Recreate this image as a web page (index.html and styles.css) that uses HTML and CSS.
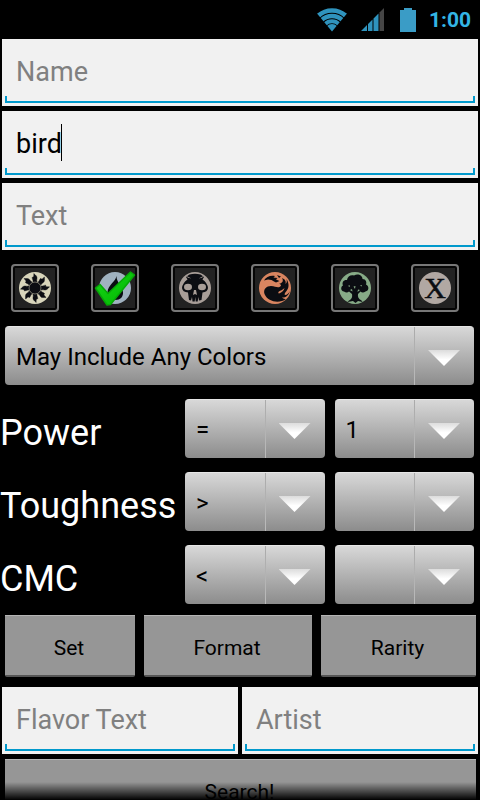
FILE: index.html
```html
<!DOCTYPE html>
<html lang="en">
<head>
<meta charset="utf-8">
<meta name="viewport" content="width=device-width, initial-scale=1">
<title>Card Search</title>
<link rel="stylesheet" href="styles.css">
</head>
<body>
<header class="status">
  <svg class="status-wifi" viewBox="0 0 30 24" aria-hidden="true">
    <clipPath id="wedge"><path d="M15 23.500L-3 2V-2H33V2Z"/></clipPath>
    <g clip-path="url(#wedge)" fill="none" stroke="#2f93bd">
      <circle cx="15" cy="23" r="20.500" stroke-width="4.700"/>
      <circle cx="15" cy="23" r="15" stroke-width="4.300"/>
      <circle cx="15" cy="23" r="9.800" stroke-width="4"/>
      <circle cx="15" cy="23" r="3.500" stroke-width="7"/>
    </g>
  </svg>
  <svg class="status-signal" viewBox="0 0 24 24" aria-hidden="true">
    <path d="M0 23L6 17V23ZM7 16L11.500 11.500V23H7ZM12.500 10.500L17.500 5.500V23H12.500Z" fill="#2f93bd"/>
    <path d="M18.500 4.500L23 0V23H18.500Z" fill="#454545"/>
  </svg>
  <svg class="status-battery" viewBox="0 0 16 24" aria-hidden="true">
    <path d="M0 2H4V0H12V2H16V24H0Z" fill="#3a9cc6"/>
  </svg>
  <time class="status-time">1:00</time>
</header>

<main class="form">
  <div class="field"><input class="field-input" type="text" placeholder="Name" aria-label="Name"></div>
  <div class="field"><input class="field-input" type="text" value="bird" aria-label="Type"><span class="caret"></span></div>
  <div class="field"><input class="field-input" type="text" placeholder="Text" aria-label="Text"></div>

  <div class="colors">
    <label class="mana">
      <input class="mana-box" type="checkbox" aria-label="White">
      <svg class="mana-icon" viewBox="0 0 48 48" aria-hidden="true">
        <defs><path id="ray" d="M22 18C22.500 16.500 21 15 21.200 13C22.200 13.800 23 13 22.800 9.500C24.500 11 26.500 12.500 26 14.500C25.600 16 25.800 17 26.200 18Z"/></defs>
        <circle cx="24" cy="24" r="16" fill="#d8d5bb"/>
        <g fill="#0b0d12" stroke="#0b0d12" stroke-width="0.400">
          <use href="#ray"/><use href="#ray" transform="rotate(45 24 24)"/><use href="#ray" transform="rotate(90 24 24)"/><use href="#ray" transform="rotate(135 24 24)"/>
          <use href="#ray" transform="rotate(180 24 24)"/><use href="#ray" transform="rotate(225 24 24)"/><use href="#ray" transform="rotate(270 24 24)"/><use href="#ray" transform="rotate(315 24 24)"/>
        </g>
        <circle cx="24" cy="24" r="6" fill="#0b0d12" stroke="#77766a" stroke-width="0.800"/>
      </svg>
    </label>
    <label class="mana">
      <input class="mana-box" type="checkbox" checked aria-label="Blue">
      <svg class="mana-icon" viewBox="0 0 48 48" aria-hidden="true">
        <circle cx="24" cy="24" r="16" fill="#a0b2c0"/>
        <path d="M25.500 12C25 17 17 21 16.500 28C16.300 33 20 36 24.500 36C29 36 32.500 33 32 28C31.500 22 25.500 19 25.500 12Z" fill="#0b0d12"/>
      </svg>
      <svg class="mana-tick" viewBox="0 0 48 48" aria-hidden="true">
        <defs><linearGradient id="tick" x1="0" y1="0" x2="1" y2="1"><stop offset="0" stop-color="#18d818"/><stop offset="1" stop-color="#00b400"/></linearGradient></defs>
        <path d="M4.500 24L9 20.500L17 29.500L39.500 8L43.500 11L19.500 40.500L16 41Z" fill="url(#tick)" stroke="#06a806" stroke-width="1.500" stroke-linejoin="round"/>
      </svg>
    </label>
    <label class="mana">
      <input class="mana-box" type="checkbox" aria-label="Black">
      <svg class="mana-icon" viewBox="0 0 48 48" aria-hidden="true">
        <circle cx="24" cy="24" r="16" fill="#a89e98"/>
        <path d="M15 13L18.500 10.500Q24 9 29.500 10.500L33 13L31.500 15.500Q36.500 19 37 24Q36.500 28 31.500 28.500L30.500 36L28 36.500L27.300 33L26.700 37.500H24.700L24.300 33L23.700 37.500H21.500L21 33L20 36.500L18 36L17 28.500Q11.500 28 11 24Q11.500 19 16.500 15.500Z" fill="#0b0d12"/>
        <path d="M14.500 11.500L20.500 14.500L17 13.800ZM33.500 11.500L27.500 14.500L31 13.800Z" fill="#a89e98"/>
        <ellipse cx="17" cy="23" rx="4" ry="3.300" fill="#a89e98"/>
        <ellipse cx="31" cy="23" rx="4" ry="3.300" fill="#a89e98"/>
        <path d="M23 26H25L26 31L24 30L22 31Z" fill="#a89e98"/>
      </svg>
    </label>
    <label class="mana">
      <input class="mana-box" type="checkbox" aria-label="Red">
      <svg class="mana-icon" viewBox="0 0 48 48" aria-hidden="true">
        <circle cx="24" cy="24" r="16" fill="#d98560"/>
        <path d="M13.500 30C12 25 15.500 22 20 22C24 22 26 24 28.500 23C31 22 30 20 28 20C31 19 33 17.500 31 14C35 15.500 35 18.500 34.500 20C36 19 36 17 35.500 15C38.500 20 38 24 35.500 27C34 29 33 30 34 31C36 31 38 29 39 27C37.500 32 34 34 31 33.500C32 35 34 35 35 35C29 39.500 17 38.500 13.500 30Z" fill="#0b0d12"/>
        <path d="M13 16.500C15 12.500 20 11 24 12L22.500 13.500L26.500 14L25 15.500L28.500 17L25 18.500L23 17.500L20.500 16L17 15.500ZM26 11L30 12.500L28 14Z" fill="#0b0d12"/>
        <path d="M28 29.500C31 28.500 33 26.500 33.500 24C31.500 26 29.500 26.500 28 27.500C27 28.300 27.200 29.300 28 29.500Z" fill="#d98560"/>
      </svg>
    </label>
    <label class="mana">
      <input class="mana-box" type="checkbox" aria-label="Green">
      <svg class="mana-icon" viewBox="0 0 48 48" aria-hidden="true">
        <circle cx="24" cy="24" r="16" fill="#87ab87"/>
        <path d="M13 27.500C9.500 27 9.500 22.500 12 21.500C10.500 18 13 15.500 16 16C16.500 12 20 10.500 23 11.500C27 9 31.500 11.500 31.500 15C35 15 36 18.500 35 20.500C38.500 22 38 27 34.500 27.500C32.500 29 30.500 28.500 29.500 27.500L27 30C26.500 33 27.500 35 30.500 36.500L31.500 38L27 37L24.500 39L22 37L16.500 38L18 36.500C21 35 21.500 33 21 30L18 27.500C16.500 29 14.500 28.500 13 27.500Z" fill="#0b0d12"/>
        <path d="M19 26L21.500 27.500L21 25ZM26.500 28L29 26L27 25.500ZM22.500 22.500L24 25L24.500 22ZM17 22L19 23L18.500 21ZM29 21.500L30.500 22.500L31 21Z" fill="#87ab87"/>
      </svg>
    </label>
    <label class="mana">
      <input class="mana-box" type="checkbox" aria-label="Colorless">
      <svg class="mana-icon" viewBox="0 0 48 48" aria-hidden="true">
        <circle cx="24" cy="24" r="16" fill="#b1a8a3"/>
        <text class="mana-x" x="24" y="34" text-anchor="middle">X</text>
      </svg>
    </label>
  </div>

  <div class="row">
    <div class="spinner"><select class="spinner-select" aria-label="Color rule"><option>May Include Any Colors</option></select></div>
  </div>
  <div class="row stat">
    <label class="stat-label" for="power-op">Power</label>
    <div class="spinner"><select class="spinner-select" id="power-op"><option>=</option></select></div>
    <div class="spinner"><select class="spinner-select" aria-label="Power value"><option>1</option></select></div>
  </div>
  <div class="row stat">
    <label class="stat-label" for="tough-op">Toughness</label>
    <div class="spinner"><select class="spinner-select" id="tough-op"><option>&gt;</option></select></div>
    <div class="spinner"><select class="spinner-select" aria-label="Toughness value"><option></option></select></div>
  </div>
  <div class="row stat">
    <label class="stat-label" for="cmc-op">CMC</label>
    <div class="spinner"><select class="spinner-select" id="cmc-op"><option>&lt;</option></select></div>
    <div class="spinner"><select class="spinner-select" aria-label="CMC value"><option></option></select></div>
  </div>

  <div class="filters">
    <button class="button" type="button">Set</button>
    <button class="button" type="button">Format</button>
    <button class="button" type="button">Rarity</button>
  </div>

  <div class="pair">
    <div class="field"><input class="field-input" type="text" placeholder="Flavor Text" aria-label="Flavor Text"></div>
    <div class="field"><input class="field-input" type="text" placeholder="Artist" aria-label="Artist"></div>
  </div>

  <div class="submit"><button class="button" type="submit">Search!</button></div>
</main>
</body>
</html>
```
FILE: styles.css
```css
* {
  box-sizing: border-box;
}

body {
  margin: 0;
  height: 100vh;
  display: flex;
  flex-direction: column;
  overflow: hidden;
  background: #000;
  color: #fff;
  font-family: Roboto, "Liberation Sans", sans-serif;
}

.status {
  flex: none;
  display: flex;
  justify-content: flex-end;
  align-items: center;
  height: 39px;
  padding-right: 9px;
}

.status-wifi {
  width: 30px;
  height: 24px;
  margin-right: 14px;
}

.status-signal {
  width: 24px;
  height: 24px;
  margin-right: 15px;
}

.status-battery {
  width: 16px;
  height: 24px;
  margin-right: 13px;
}

.status-time {
  color: #33b5e5;
  font-size: 21px;
  font-weight: 700;
}

.form {
  position: relative;
  flex: 1;
  min-height: 0;
  overflow: hidden;
}

/* Fading edge over content that continues below the fold */
.form::after {
  content: "";
  position: absolute;
  left: 0;
  right: 0;
  bottom: 0;
  height: 18px;
  background: linear-gradient(transparent, #000);
}

.field {
  position: relative;
  margin: 0 2px 5px;
  padding: 0 3px 3px;
  height: 67px;
  background: #f1f1f1;
}

.field-input {
  display: block;
  width: 100%;
  height: 64px;
  padding: 2px 11px 0;
  border: 0;
  border-radius: 0;
  outline: 0;
  background:
    linear-gradient(#0099cc, #0099cc) left bottom / 2px 7px no-repeat,
    linear-gradient(#0099cc, #0099cc) right bottom / 2px 7px no-repeat,
    linear-gradient(#0099cc, #0099cc) left bottom / 100% 2px no-repeat;
  color: #000;
  font-family: inherit;
  font-size: 27px;
}

.field-input::placeholder {
  color: #808080;
  opacity: 1;
}

.caret {
  position: absolute;
  left: 59px;
  top: 13px;
  width: 1px;
  height: 37px;
  background: #000;
}

.colors {
  display: grid;
  grid-template-columns: repeat(6, 1fr);
  padding: 9px 0 14px;
}

.mana {
  display: grid;
  grid-template-columns: 48px;
  margin-left: 11px;
}

.mana-box,
.mana-icon,
.mana-tick {
  grid-area: 1 / 1;
  width: 48px;
  height: 48px;
}

.mana-box {
  appearance: none;
  margin: 0;
  border: 2px solid #777;
  border-radius: 4px;
  background: #222;
  box-shadow: inset 0 0 0 2px #050505;
}

.mana-icon,
.mana-tick {
  pointer-events: none;
}

.mana-tick {
  visibility: hidden;
}

.mana-box:checked ~ .mana-tick {
  visibility: visible;
}

.mana-x {
  font-family: "Liberation Serif", serif;
  font-size: 30px;
  fill: #0b0d12;
  stroke: #0b0d12;
  stroke-width: 0.5;
}

.row {
  padding: 0 6px 0 5px;
  margin-bottom: 14px;
}

.stat {
  display: grid;
  grid-template-columns: 170px 1fr 1fr;
  column-gap: 10px;
}

.stat-label {
  margin-left: -5px;
  padding-top: 10px;
  font-size: 36px;
  line-height: 49px;
  white-space: nowrap;
}

.spinner {
  position: relative;
  height: 59px;
}

.spinner-select {
  appearance: none;
  display: block;
  width: 100%;
  height: 59px;
  padding: 2px 60px 0 11px;
  border: 0;
  border-top: 1px solid #e6e6e6;
  border-radius: 4px;
  outline: 0;
  background:
    linear-gradient(#aaa, #bbb) right 59px top / 1px 100% no-repeat,
    linear-gradient(#d8d8d8, #8c8c8c);
  color: #000;
  font-family: inherit;
  font-size: 24px;
}

.spinner::after {
  content: "";
  position: absolute;
  right: 14px;
  top: 24px;
  width: 32px;
  height: 16px;
  background: linear-gradient(#dcdcdc, #fff 60%);
  clip-path: polygon(0 0, 100% 0, 50% 100%);
  pointer-events: none;
}

.filters {
  display: grid;
  grid-template-columns: 130fr 168fr 155fr;
  column-gap: 9px;
  margin-top: -3px;
  padding: 0 4px 10px 5px;
}

.button {
  width: 100%;
  height: 62px;
  padding: 4px 2px 0 0;
  border: 0;
  border-top: 1px solid #b4b4b4;
  border-bottom: 2px solid #555;
  border-radius: 0 0 2px 2px;
  background: #969696;
  color: #000;
  font-family: inherit;
  font-size: 21px;
}

.pair {
  display: grid;
  grid-template-columns: 1fr 1fr;
}

.submit {
  padding: 0 4px 0 5px;
}
```
